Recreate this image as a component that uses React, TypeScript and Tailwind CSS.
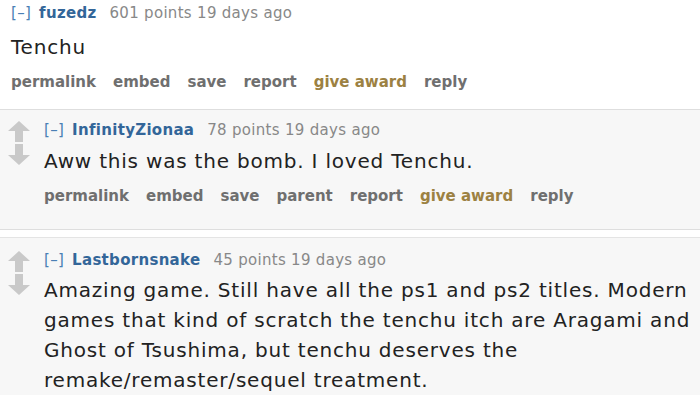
import React from "react";

type Comment = {
  author: string;
  points: number;
  body: string;
  actions: string[];
};

const comments: Comment[] = [
  {
    author: "fuzedz",
    points: 601,
    body: "Tenchu",
    actions: ["permalink", "embed", "save", "report", "give award", "reply"],
  },
  {
    author: "InfinityZionaa",
    points: 78,
    body: "Aww this was the bomb. I loved Tenchu.",
    actions: ["permalink", "embed", "save", "parent", "report", "give award", "reply"],
  },
  {
    author: "Lastbornsnake",
    points: 45,
    body: "Amazing game. Still have all the ps1 and ps2 titles. Modern games that kind of scratch the tenchu itch are Aragami and Ghost of Tsushima, but tenchu deserves the remake/remaster/sequel treatment.",
    actions: [],
  },
];

function Arrow({ down = false }: { down?: boolean }) {
  return (
    <svg width="22" height="21" viewBox="0 0 22 21" className={down ? "rotate-180" : ""}>
      <polygon points="11,0 22,10 15,10 15,21 7,21 7,10 0,10" fill="#c9c9c9" />
    </svg>
  );
}

function Header({ c }: { c: Comment }) {
  return (
    <div className="flex items-baseline text-[15px] leading-[20px] tracking-[0.3px]">
      <span className="text-[#4a7fb5]">[–]</span>
      <span className="ml-[8px] font-bold text-[#336699]">{c.author}</span>
      <span className="ml-[13px] text-[#888]">{c.points} points 19 days ago</span>
    </div>
  );
}

function Actions({ items }: { items: string[] }) {
  return (
    <div className="flex gap-[17px] text-[15px] font-bold leading-[20px] text-[#6f6f6f]">
      {items.map((a) => (
        <span key={a} className={a === "give award" ? "text-[#9c8142]" : ""}>
          {a}
        </span>
      ))}
    </div>
  );
}

export default function App() {
  const [top, second, third] = comments;
  return (
    <div
      className="h-[402px] w-[700px] overflow-hidden bg-white text-[#222]"
      style={{ fontFamily: '"DejaVu Sans", Verdana, sans-serif' }}
    >
      {/* top-level comment */}
      <div className="h-[110px] border-b border-[#dedede] px-[11px] pt-[3px]">
        <Header c={top} />
        <div className="mt-[9px] text-[20px] leading-[30px] tracking-[0.04em]">{top.body}</div>
        <div className="mt-[10px]">
          <Actions items={top.actions} />
        </div>
      </div>

      {/* child comment */}
      <div className="flex h-[120px] border-b border-[#dedede] bg-[#f7f7f7] pt-[10px]">
        <div className="flex w-[44px] flex-col items-start gap-[2px] pl-[8px] pt-[1px]">
          <Arrow />
          <Arrow down />
        </div>
        <div className="flex-1 pr-[10px]">
          <Header c={second} />
          <div className="mt-[6px] text-[20px] leading-[30px] tracking-[0.04em]">{second.body}</div>
          <div className="mt-[10px]">
            <Actions items={second.actions} />
          </div>
        </div>
      </div>

      <div className="h-[8px] border-b border-[#e4e4e4] bg-white" />

      {/* child comment */}
      <div className="flex bg-[#f7f7f7] pt-[12px]">
        <div className="flex w-[44px] flex-col items-start gap-[2px] pl-[8px] pt-[1px]">
          <Arrow />
          <Arrow down />
        </div>
        <div className="flex-1 pr-[6px]">
          <Header c={third} />
          <div className="mt-[5px] text-[20px] leading-[30px] tracking-[0.04em]">{third.body}</div>
        </div>
      </div>
    </div>
  );
}
